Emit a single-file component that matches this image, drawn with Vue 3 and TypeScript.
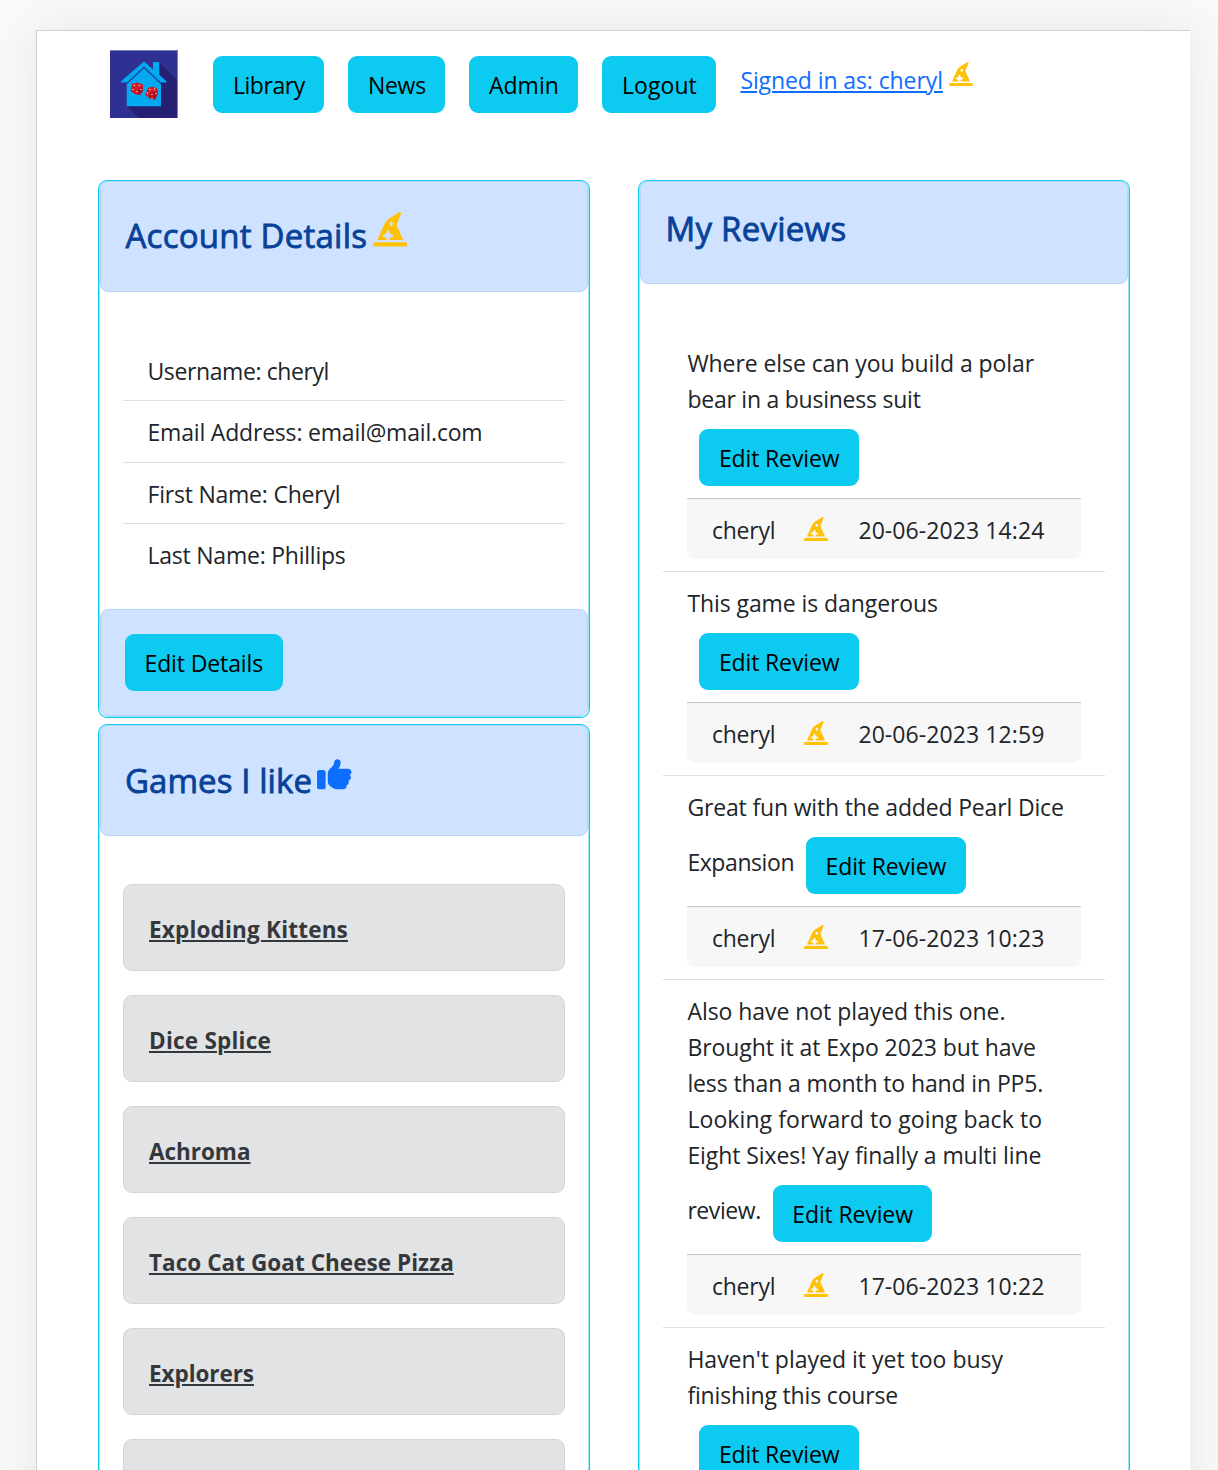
<script setup lang="ts">
import { h, type FunctionalComponent } from 'vue'

interface Line {
  text: string
  track: number
}
interface Review {
  lines: Line[]
  tail?: Line
  date?: string
}

const line = (text: string, track = 0): Line => ({ text, track })

const nav = [
  { ...line('Library', -0.429), width: 111 },
  { ...line('News', -0.258), width: 97 },
  { ...line('Admin', 0.034), width: 109 },
  { ...line('Logout', 0.086), width: 114 },
]

const details: Line[] = [
  line('Username: cheryl', -0.4),
  line('Email Address: email@mail.com', -0.19),
  line('First Name: Cheryl', -0.22),
  line('Last Name: Phillips', -0.23),
]

const games: Line[] = [
  line('Exploding Kittens', 0.194),
  line('Dice Splice', 0.23),
  line('Achroma', -0.031),
  line('Taco Cat Goat Cheese Pizza', 0.05),
  line('Explorers', -0.063),
  line(''),
]

const reviews: Review[] = [
  {
    lines: [line('Where else can you build a polar', -0.07), line('bear in a business suit', -0.24)],
    date: '20-06-2023 14:24',
  },
  { lines: [line('This game is dangerous', -0.08)], date: '20-06-2023 12:59' },
  {
    lines: [line('Great fun with the added Pearl Dice', -0.165)],
    tail: line('Expansion', -0.42),
    date: '17-06-2023 10:23',
  },
  {
    lines: [
      line('Also have not played this one.', -0.05),
      line('Brought it at Expo 2023 but have', -0.075),
      line('less than a month to hand in PP5.', -0.12),
      line('Looking forward to going back to', 0.09),
      line('Eight Sixes! Yay finally a multi line', -0.08),
    ],
    tail: line('review.', -0.42),
    date: '17-06-2023 10:22',
  },
  {
    lines: [line("Haven't played it yet too busy", 0), line('finishing this course', -0.17)],
  },
]

const space = (l: Line) => ({ letterSpacing: l.track + 'px' })

const HatIcon: FunctionalComponent = () =>
  h('svg', { viewBox: '0 0 512 512', fill: '#ffc107', 'aria-hidden': 'true' }, [
    h('path', {
      d: 'M64 416L168.6 180.7c15.3-34.4 40.3-63.5 72-83.7l146.9-94c3-1.9 6.5-2.9 10-2.9C407.7 0 416 8.3 416 18.5v1.6c0 2.6-.5 5.1-1.4 7.5L354.8 176.9c-1.9 4.7-2.8 9.7-2.8 14.7c0 5.5 1.2 11 3.4 16.1L448 416H240.9l11.8-35.4 40.4-13.5c6.5-2.2 10.9-8.3 10.9-15.2s-4.4-13-10.9-15.2l-40.4-13.5-13.5-40.4C237 276.4 230.9 272 224 272s-13 4.4-15.2 10.9l-13.5 40.4-40.4 13.5C148.4 339 144 345.1 144 352s4.4 13 10.9 15.2l40.4 13.5L207.1 416H64zM279.6 141.5c-1.1-3.3-4.1-5.5-7.6-5.5s-6.5 2.2-7.6 5.5l-6.7 20.2-20.2 6.7c-3.3 1.1-5.5 4.1-5.5 7.6s2.2 6.5 5.5 7.6l20.2 6.7 6.7 20.2c1.1 3.3 4.1 5.5 7.6 5.5s6.5-2.2 7.6-5.5l6.7-20.2 20.2-6.7c3.3-1.1 5.5-4.1 5.5-7.6s-2.2-6.5-5.5-7.6l-20.2-6.7-6.7-20.2zM32 448H480c17.7 0 32 14.3 32 32s-14.3 32-32 32H32c-17.7 0-32-14.3-32-32s14.3-32 32-32z',
    }),
  ])
</script>

<template>
  <div class="page">
    <div class="shell">
      <header class="bar">
        <svg class="logo" viewBox="0 0 68 68" aria-hidden="true">
          <rect width="68" height="68" fill="#2e3192" />
          <path d="M49 12L68 31V68H29L17 56.500L50 50z" fill="#262072" />
          <path d="M0 .5H67.500V68" fill="none" stroke="#7d7fbd" />
          <path d="M43 12H49.300V25L56.500 31.200V32.500H50L34 18L18 32.500H11V31.200L34 11.500L43 19.500z" fill="#00a9f0" />
          <path d="M34 18L51 33.500V56.300H16.700V33.500z" fill="#00a9f0" />
          <path d="M16.700 33.500L34 17.300L51 33.500" fill="none" stroke="#24408f" stroke-width="1.300" />
          <path d="M22 34l5-1.500 6 2-.5 6-2 4.500-4.500-.5-5.500-3.500z" fill="#d81722" />
          <path d="M27 45l1.500-6 4.500-2-.5 5z" fill="#9e0f1c" />
          <path d="M37.500 38.500l4.500-2 5.500 2 .5 6-3 5-5.500-1-4-3.500z" fill="#d81722" />
          <path d="M39.500 48.500l.5-5.500 7.500-1.500-2.500 8z" fill="#a50f1c" />
          <g fill="#ffd9dc">
            <circle cx="24.500" cy="35.500" r=".7" /><circle cx="29" cy="35.500" r=".7" />
            <circle cx="23" cy="39.500" r=".7" /><circle cx="27" cy="41.500" r=".7" />
            <circle cx="31" cy="39.500" r=".7" /><circle cx="40" cy="39.500" r=".7" />
            <circle cx="44.500" cy="39" r=".7" /><circle cx="37.500" cy="43" r=".7" />
            <circle cx="42" cy="44.500" r=".7" /><circle cx="46" cy="43.500" r=".7" />
            <circle cx="42" cy="48" r=".7" />
          </g>
        </svg>
        <nav class="nav">
          <a v-for="n in nav" :key="n.text" class="btn" :style="{ width: n.width + 'px' }">
            <span :style="space(n)">{{ n.text }}</span>
          </a>
        </nav>
        <a class="signed">Signed in as: cheryl</a>
        <HatIcon class="hat-small hat-nav" />
      </header>

      <main class="columns">
        <div class="column">
          <section class="card account">
            <div class="panel head">
              <h2 class="title-account">Account Details</h2>
              <HatIcon class="head-icon" />
            </div>
            <ul class="details">
              <li v-for="d in details" :key="d.text"><span :style="space(d)">{{ d.text }}</span></li>
            </ul>
            <div class="panel foot">
              <a class="btn edit-details"><span>Edit Details</span></a>
            </div>
          </section>

          <section class="card">
            <div class="panel head liked">
              <h2 class="title-liked">Games I like</h2>
              <svg class="head-icon thumb" viewBox="0 0 512 512" fill="#0d6efd" aria-hidden="true">
                <path d="M313.400 32.900c26 5.200 42.900 30.500 37.700 56.500l-2.300 11.400c-5.300 26.700-15.100 52.100-28.800 75.200H464c26.500 0 48 21.500 48 48c0 18.500-10.500 34.600-25.900 42.600C497 275.400 504 288.900 504 304c0 23.400-16.800 42.900-38.900 47.100c4.400 7.300 6.900 15.800 6.900 24.900c0 21.300-13.900 39.400-33.100 45.600c.7 3.300 1.100 6.800 1.100 10.400c0 26.500-21.500 48-48 48H294.500c-19 0-37.500-5.600-53.300-16.100l-38.500-25.700C176 420.400 160 390.400 160 358.300V320 272 247.100c0-29.200 13.300-56.700 36-75l7.400-5.900c26.500-21.200 44.600-51 51.200-84.200l2.300-11.400c5.200-26 30.500-42.900 56.500-37.700zM32 192H96c17.700 0 32 14.300 32 32V448c0 17.700-14.300 32-32 32H32c-17.700 0-32-14.300-32-32V224c0-17.700 14.300-32 32-32z" />
              </svg>
            </div>
            <div class="games">
              <div v-for="g in games" :key="g.text" class="game">
                <a :style="space(g)">{{ g.text }}</a>
              </div>
            </div>
          </section>
        </div>

        <section class="card">
          <div class="panel head short">
            <h2 class="title-reviews">My Reviews</h2>
          </div>
          <div class="reviews">
            <article v-for="(r, i) in reviews" :key="i" class="review">
              <p v-for="l in r.lines" :key="l.text" :style="space(l)">{{ l.text }}</p>
              <div class="action">
                <span v-if="r.tail" class="tail" :style="space(r.tail)">{{ r.tail.text }}</span>
                <a class="btn edit-review"><span>Edit Review</span></a>
              </div>
              <footer v-if="r.date" class="meta">
                <span class="author">cheryl</span>
                <HatIcon class="hat-small hat-meta" />
                <span class="date">{{ r.date }}</span>
              </footer>
            </article>
          </div>
        </section>
      </main>
    </div>
  </div>
</template>

<style>
body {
  margin: 0;
  background: #f8faf9;
}
</style>

<style scoped>
.page {
  height: 1470px;
  overflow: hidden;
}
.shell {
  box-sizing: border-box;
  width: 1154px;
  height: 1500px;
  margin: 30px 0 0 36px;
  border: solid #d0d2d1;
  border-width: 1px 0 0 1px;
  background: #fff;
  box-shadow: 0 0 45px rgba(0, 0, 0, 0.08);
  color: #212529;
  font: 400 23px/36px 'Open Sans', 'Noto Sans', sans-serif;
  white-space: nowrap;
}
.shell * {
  box-sizing: border-box;
}
.bar {
  display: flex;
  align-items: flex-start;
  height: 149px;
  padding: 19px 0 0 73px;
}
.logo {
  width: 68px;
  height: 68px;
  flex: none;
}
.nav {
  display: flex;
  gap: 24px;
  margin: 6px 24px 0 35.4px;
}
.btn {
  display: flex;
  justify-content: center;
  height: 57px;
  padding-top: 11px;
  border-radius: 9px;
  background: #0dcaf0;
  color: #000;
}
.signed {
  margin-top: 12px;
  color: #0d6efd;
  letter-spacing: -0.095px;
  text-decoration: underline;
  text-decoration-thickness: 2px;
  text-underline-offset: 2px;
}
.hat-small {
  width: 24px;
  height: 24px;
  flex: none;
}
.hat-nav {
  margin: 12px 0 0 6.5px;
}
.columns {
  display: flex;
  align-items: flex-start;
  gap: 48px;
  padding-left: 61px;
}
.column {
  display: flex;
  flex-direction: column;
  gap: 6px;
}
.card {
  width: 492px;
  min-height: 1310px;
  border: 1px solid #0dcaf0;
  border-radius: 9px;
  box-shadow: inset 0 0 0 1px rgba(13, 202, 240, 0.45);
}
.account {
  min-height: 0;
  height: 538px;
}
.panel {
  margin: 0 1px;
  border: 1px solid #b6d4fe;
  border-radius: 8px;
  background: #cfe2ff;
}
.head {
  display: flex;
  height: 111px;
  padding: 30px 0 0 24.5px;
}
.head.liked {
  padding: 31px 0 0 24px;
}
.head.short {
  height: 103px;
  padding: 23px 0 0 24.5px;
}
h2 {
  margin: 0;
  color: #084298;
  font-size: 33px;
  font-weight: 400;
  line-height: 48px;
  -webkit-text-stroke: 0.8px #084298;
}
.title-account {
  width: 242px;
  letter-spacing: 0.24px;
}
.title-liked {
  width: 187px;
  letter-spacing: 0.08px;
}
.title-reviews {
  letter-spacing: 0.26px;
}
.head-icon {
  width: 34.5px;
  height: 34.5px;
  margin: 0 0 0 5px;
}
.thumb {
  margin-left: 5px;
}
.details {
  margin: 48px 24px 24px;
  padding: 0;
  list-style: none;
}
.details li {
  height: 61.4px;
  padding: 13px 24.5px 0;
  border-bottom: 1px solid #dfdfdf;
}
.details li:last-child {
  height: 60.8px;
  border: 0;
}
.foot {
  height: 107px;
  padding: 24px;
}
.edit-details {
  width: 157.5px;
  letter-spacing: -0.125px;
}
.games {
  display: flex;
  flex-direction: column;
  gap: 24px;
  padding: 48px 24px 0;
}
.game {
  height: 87px;
  padding: 27px 25px 0;
  border: 1px solid #d3d6d8;
  border-radius: 9px;
  background: #e2e3e5;
  color: #34383c;
  font-size: 22.5px;
  font-weight: 700;
}
.game a {
  text-decoration: underline;
  text-decoration-thickness: 2px;
  text-underline-offset: 2px;
}
.reviews {
  padding: 48px 24px 0;
}
.review {
  padding: 13px 24.4px 12px;
  border-bottom: 1px solid #dfdfdf;
}
.review p {
  margin: 0;
}
.action {
  display: flex;
  height: 81px;
}
.tail {
  margin-top: 19px;
}
.edit-review {
  width: 159.5px;
  margin: 12px 0 0 12px;
  letter-spacing: -0.135px;
}
.meta {
  display: flex;
  height: 61px;
  padding: 12.5px 24.5px 0;
  border-top: 1px solid #c8c8c8;
  border-radius: 0 0 8px 8px;
  background: #f7f7f7;
}
.author {
  width: 64.5px;
  letter-spacing: -0.2px;
}
.hat-meta {
  margin: 5.5px 30px 0 28px;
}
.date {
  letter-spacing: 0.09px;
}
</style>
